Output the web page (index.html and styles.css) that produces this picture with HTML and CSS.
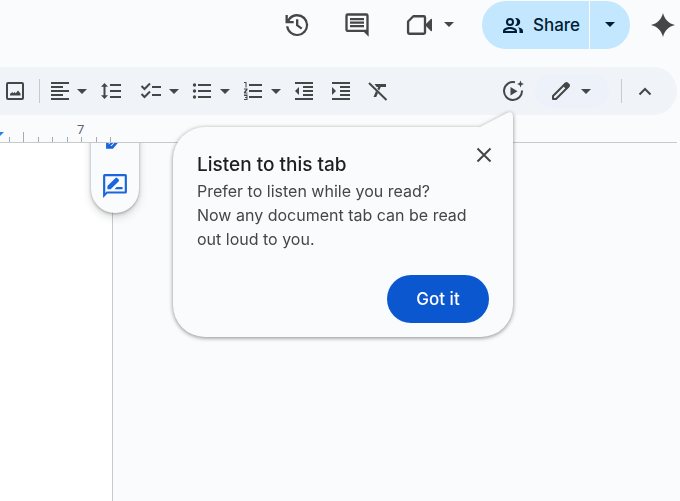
FILE: index.html
```html
<!DOCTYPE html>
<html lang="en">
<head>
    <meta charset="UTF-8">
    <title>Document</title>
    <link rel="stylesheet" href="styles.css">
</head>
<body>
<header class="header">
    <button class="icon-btn" aria-label="Version history">
        <svg class="icon-lg" viewBox="0 0 24 24"><path d="M13 2.500a9.500 9.500 0 0 0-8 4.300V3.500H3V10.500h7v-2H6.400A7.500 7.500 0 1 1 5.500 13H3.500A9.500 9.500 0 1 0 13 2.500zm-1 4.500v5.600l4.300 3.300 1.200-1.600-3.500-2.600V7z"/></svg>
    </button>
    <button class="icon-btn" aria-label="Comments">
        <svg class="icon-lg" viewBox="0 0 24 24"><path d="M22 4a2 2 0 0 0-2-2H4a2 2 0 0 0-2 2v12a2 2 0 0 0 2 2h14l4 4zm-2 12.500V16H4V4h16zM6 12h12v2H6zm0-3h12v2H6zm0-3h12v2H6z"/></svg>
    </button>
    <button class="meet-btn" aria-label="Start a call">
        <svg class="icon-lg" viewBox="-1 0 24 24"><path d="M7 4.500L2.500 9v9.500a1 1 0 0 0 1 1H16a1 1 0 0 0 1-1v-13a1 1 0 0 0-1-1z" fill="none" stroke="currentColor" stroke-width="2" stroke-linejoin="round"/><path d="M17 12l5-5.200q1-.6 1 .5v9.400q0 1.100-1 .5z"/></svg>
        <svg class="caret" viewBox="0 0 10 5"><path d="M0 0h10L5 5z"/></svg>
    </button>
    <div class="share">
        <button class="share-main">
            <svg class="icon" viewBox="0 0 24 24"><path d="M9 5a4 4 0 1 0 0 8 4 4 0 0 0 0-8zm0 2a2 2 0 1 1 0 4 2 2 0 0 1 0-4zm0 7c-2.700 0-7 1.300-7 4v2h14v-2c0-2.700-4.300-4-7-4zm-5 4c.2-.7 2.700-2 5-2s4.800 1.300 5 2zM14 5.200A4.500 4.500 0 0 1 14 12.800 4 4 0 1 0 14 5.200zM17 14.300c1 .9 1.500 2.100 1.500 3.700v2H22v-2c0-2-2.200-3.200-5-3.700z"/></svg>
            <span>Share</span>
        </button>
        <button class="share-more" aria-label="Sharing options">
            <svg class="caret" viewBox="0 0 10 5"><path d="M0 0h10L5 5z"/></svg>
        </button>
    </div>
    <button class="spark-btn" aria-label="Assistant">
        <svg class="icon" viewBox="0 0 24 24"><path d="M12 0c1.500 6.300 5.700 10.500 12 12-6.300 1.500-10.500 5.700-12 12C10.500 17.700 6.300 13.500 0 12 6.300 10.500 10.500 6.300 12 0z"/></svg>
    </button>
</header>

<div class="toolbar">
    <button class="tool" aria-label="Insert image">
        <svg class="icon" viewBox="0 0 24 24"><path d="M19 5v14H5V5zm0-2H5a2 2 0 0 0-2 2v14a2 2 0 0 0 2 2h14a2 2 0 0 0 2-2V5a2 2 0 0 0-2-2zM7 16.500h10.500v-2L15 11.500l-2.200 2.800-1.300-1.200-1.200 1.200-1-1.300L7 15z"/></svg>
    </button>
    <span class="divider"></span>
    <button class="tool split" aria-label="Align">
        <svg class="icon" viewBox="0 0 24 24"><path d="M3 3h18v2H3zm0 4h12v2H3zm0 4h18v2H3zm0 4h12v2H3zm0 4h18v2H3z"/></svg>
        <svg class="caret" viewBox="0 0 10 5"><path d="M0 0h10L5 5z"/></svg>
    </button>
    <button class="tool" aria-label="Line spacing">
        <svg class="icon" viewBox="0 0 24 24"><path d="M5.500 4L2 7.800h2.500v8.400H2L5.500 20 9 16.200H6.500V7.800H9zM11 5h11v2H11zm0 6h11v2H11zm0 6h11v2H11z"/></svg>
    </button>
    <div class="lists">
        <button class="tool split" aria-label="Checklist">
            <svg class="icon" viewBox="0 0 24 24"><path d="M13 7h9v2h-9zm0 8h9v2h-9z"/><path d="M2.500 7l3 3L11 4.500M2.500 15l3 3 5.500-5.500" fill="none" stroke="currentColor" stroke-width="2"/></svg>
            <svg class="caret" viewBox="0 0 10 5"><path d="M0 0h10L5 5z"/></svg>
        </button>
        <button class="tool split" aria-label="Bulleted list">
            <svg class="icon" viewBox="0 0 24 24"><path d="M8 5h13v2H8zm0 6h13v2H8zm0 6h13v2H8z"/><circle cx="4.500" cy="6" r="1.700"/><circle cx="4.500" cy="12" r="1.700"/><circle cx="4.500" cy="18" r="1.700"/></svg>
            <svg class="caret" viewBox="0 0 10 5"><path d="M0 0h10L5 5z"/></svg>
        </button>
        <button class="tool split" aria-label="Numbered list">
            <svg class="icon" viewBox="0 0 24 24"><path d="M8 5h13v2H8zm0 6h13v2H8zm0 6h13v2H8zM3 3h2.500v5.500h-1V4H3zM3 9.500h3.500V11l-2 2.500h2v1H3V13l2-2.500H3zM3 15.500h3.500v5.500H3v-1h2.500v-1H4v-1h1.500v-1H3z"/></svg>
            <svg class="caret" viewBox="0 0 10 5"><path d="M0 0h10L5 5z"/></svg>
        </button>
    </div>
    <button class="tool" aria-label="Decrease indent">
        <svg class="icon" viewBox="0 0 24 24"><path d="M3 3h18v2H3zm8 4h10v2H11zm0 4h10v2H11zm0 4h10v2H11zm-8 4h18v2H3zM3 12l4-4v8z"/></svg>
    </button>
    <button class="tool" aria-label="Increase indent">
        <svg class="icon" viewBox="0 0 24 24"><path d="M3 3h18v2H3zm8 4h10v2H11zm0 4h10v2H11zm0 4h10v2H11zm-8 4h18v2H3zM3 8l4 4-4 4z"/></svg>
    </button>
    <button class="tool" aria-label="Clear formatting">
        <svg class="icon" viewBox="0 0 24 24"><path d="M3 4l17.500 17" fill="none" stroke="currentColor" stroke-width="2"/><path d="M8.500 5H20v3h-5.300l-1.500 3.500-1.800-1.800.8-1.700h-1.500zM10 12l2 2-1.800 4H7.500z"/></svg>
    </button>
    <div class="toolbar-end">
        <button class="tool" aria-label="Listen to this tab">
            <svg class="icon" viewBox="0 0 24 24"><path d="M14 3.200A9 9 0 1 0 21 11.500" fill="none" stroke="currentColor" stroke-width="2"/><path d="M9.500 8v8.500l7-4.250zM19.500 1.500l1 2.500 2.500 1-2.500 1-1 2.500-1-2.500-2.500-1 2.500-1z"/></svg>
        </button>
        <button class="mode" aria-label="Editing mode">
            <svg class="icon" viewBox="0 0 24 24"><path d="M4 20v-3L16.500 4.500l3 3L7 20z" fill="none" stroke="currentColor" stroke-width="2" stroke-linejoin="round"/><path d="M13.500 6.500l3-3q1.200-1 2.300 0l1.700 1.700q1 1.200 0 2.300l-3 3z"/></svg>
            <svg class="caret" viewBox="0 0 10 5"><path d="M0 0h10L5 5z"/></svg>
        </button>
        <span class="divider"></span>
        <button class="tool" aria-label="Hide menus">
            <svg class="icon" viewBox="0 0 24 24"><path d="M6.500 15.500L12 10l5.500 5.500" fill="none" stroke="currentColor" stroke-width="2"/></svg>
        </button>
    </div>
</div>

<div class="ruler">
    <span class="marker"></span>
    <span class="ticks"><i></i><i class="half"></i><i></i><i></i><i></i><i></i><i></i><i></i></span>
    <span class="number">7</span>
</div>

<main class="canvas">
    <div class="page"></div>
    <div class="side-actions">
        <button aria-label="Edit">
            <svg class="icon-md" viewBox="0 0 24 24"><path d="M5 17v5.500h4.500L20 10" fill="none" stroke="currentColor" stroke-width="2.500"/><path d="M5 22.500l9-9" fill="none" stroke="currentColor" stroke-width="2"/></svg>
        </button>
        <button aria-label="Suggest edits">
            <svg class="icon-md" viewBox="0 0 24 24"><path d="M1 23V2.500A1.500 1.500 0 0 1 2.500 1h19A1.500 1.500 0 0 1 23 2.500v15a1.500 1.500 0 0 1-1.500 1.500H5zm2-4.500L4.300 17H21V3H3zM5 15v-3l7.500-7.500q.7-.5 1.400 0l1.600 1.600q.5.700 0 1.400L8 15zm6.500 0l2-2H19v2z"/></svg>
        </button>
    </div>
</main>

<section class="tip" role="dialog" aria-labelledby="tip-title">
    <svg class="tail" viewBox="0 0 38 32"><path d="M0 17q3 0 5-1L31 2.500Q38-1 38 6v26H0z"/></svg>
    <div class="tip-body">
        <div class="tip-head">
            <h2 id="tip-title">Listen to this tab</h2>
            <button class="close" aria-label="Close">
                <svg class="icon" viewBox="0 0 24 24"><path d="M5.500 5.500l13 13M18.500 5.500l-13 13" fill="none" stroke="currentColor" stroke-width="2"/></svg>
            </button>
        </div>
        <p>Prefer to listen while you read?<br>Now any document tab can be read<br>out loud to you.</p>
        <button class="got-it">Got it</button>
    </div>
</section>
</body>
</html>
```
FILE: styles.css
```css
*{
    box-sizing: border-box;
    margin: 0;
    padding: 0;
}
body{
    display: flex;
    flex-direction: column;
    min-height: 100vh;
    position: relative;
    overflow-x: hidden;
    background: #f9fbfd;
    color: #444746;
    font-family: Inter, "Liberation Sans", sans-serif;
}
button{
    display: flex;
    align-items: center;
    border: none;
    background: none;
    color: inherit;
    font: inherit;
    cursor: pointer;
}
svg{
    display: block;
    flex: none;
    fill: currentColor;
}
.icon{
    width: 24px;
    height: 24px;
}
.icon-md{
    width: 26px;
    height: 26px;
}
.icon-lg{
    width: 28px;
    height: 28px;
}
.caret{
    width: 10px;
    height: 5px;
}

/* header */
.header{
    display: flex;
    justify-content: flex-end;
    align-items: center;
    height: 67px;
    padding: 0 5px 18px 0;
}
.icon-btn{
    margin-right: 33px;
}
.meet-btn{
    gap: 12px;
    margin-right: 28px;
}
.share{
    display: flex;
    gap: 1px;
    height: 48px;
    color: #001d35;
}
.share-main{
    gap: 8px;
    width: 107px;
    padding-left: 19px;
    border-radius: 24px 0 0 24px;
    background: #c2e7ff;
    font-size: 17px;
    font-weight: 500;
}
.share-more{
    justify-content: center;
    width: 40px;
    border-radius: 0 24px 24px 0;
    background: #c2e7ff;
}
.spark-btn{
    margin-left: 21px;
}

/* toolbar */
.toolbar{
    display: flex;
    align-items: center;
    height: 48px;
    margin: 0 3px 0 -4px;
    padding-right: 14px;
    border-radius: 0 24px 24px 0;
    background: #f0f4f9;
}
.tool{
    justify-content: center;
    width: 37px;
    height: 36px;
}
.split{
    justify-content: flex-start;
    gap: 5px;
    width: 51px;
    padding-left: 7px;
}
.divider{
    width: 1px;
    height: 24px;
    margin: 0 1px 0 6px;
    background: #c7c9cc;
}
.lists{
    display: flex;
    margin-left: 3px;
}
.lists .split{
    gap: 6px;
}
.toolbar-end{
    display: flex;
    align-items: center;
    margin-left: auto;
}
.mode{
    gap: 8px;
    width: 74px;
    height: 34px;
    margin: 0 6px 0 4px;
    padding-left: 14px;
    border-radius: 17px;
    background: #ecf1fa;
}
.toolbar-end .divider{
    margin-right: 4px;
}

/* ruler */
.ruler{
    position: relative;
    height: 28px;
    margin-right: 3px;
    border-bottom: 1px solid #c7c9cc;
}
.ticks{
    display: flex;
    align-items: flex-end;
    justify-content: space-between;
    width: 102px;
    height: 100%;
    margin-left: 9px;
}
.ticks i{
    width: 1px;
    height: 5px;
    background: #a8abae;
}
.ticks .half{
    height: 10px;
}
.number{
    position: absolute;
    left: 77px;
    top: 7px;
    font: 13px/16px Roboto, sans-serif;
    color: #5f6368;
}
.marker{
    position: absolute;
    left: -4px;
    top: 17px;
    border: 4px solid transparent;
    border-top-color: #2b7de9;
    border-bottom: 0;
}

/* document area */
.canvas{
    flex: 1;
    position: relative;
    overflow: hidden;
}
.page{
    position: absolute;
    top: 0;
    bottom: 0;
    width: 113px;
    border-right: 1px solid #c7c9cc;
    background: #fff;
}
.side-actions{
    position: absolute;
    left: 91px;
    top: -36px;
    display: flex;
    flex-direction: column;
    align-items: center;
    gap: 24px;
    width: 48px;
    padding: 16px 0 14px;
    border-radius: 24px;
    background: #f9fbfd;
    box-shadow: 0 1px 3px rgba(60,64,67,.4), 0 4px 8px rgba(60,64,67,.2);
    color: #1a66dc;
}

/* tip bubble */
.tip{
    position: absolute;
    right: 167px;
    top: 127px;
    width: 340px;
    filter: drop-shadow(0 1px 2px rgba(0,0,0,.45));
    color: #1f1f1f;
}
.tail{
    position: absolute;
    right: 0;
    top: -16px;
    width: 38px;
    height: 32px;
    fill: #f9fbfd;
}
.tip-body{
    position: relative;
    padding: 16px 24px 14px;
    border-radius: 32px 0 32px 32px;
    background: #f9fbfd;
}
.tip-head{
    display: flex;
    justify-content: space-between;
    height: 36px;
}
.tip h2{
    padding-top: 10px;
    font-size: 19px;
    line-height: 24px;
    font-weight: 500;
}
.close{
    height: 24px;
    margin-right: -7px;
    color: #444746;
}
.tip p{
    font-size: 16px;
    line-height: 24px;
    color: #444746;
}
.got-it{
    justify-content: center;
    width: 102px;
    height: 48px;
    margin: 24px 0 0 auto;
    border-radius: 24px;
    background: #0b57d0;
    color: #fff;
    font-size: 17px;
    font-weight: 500;
}
```
